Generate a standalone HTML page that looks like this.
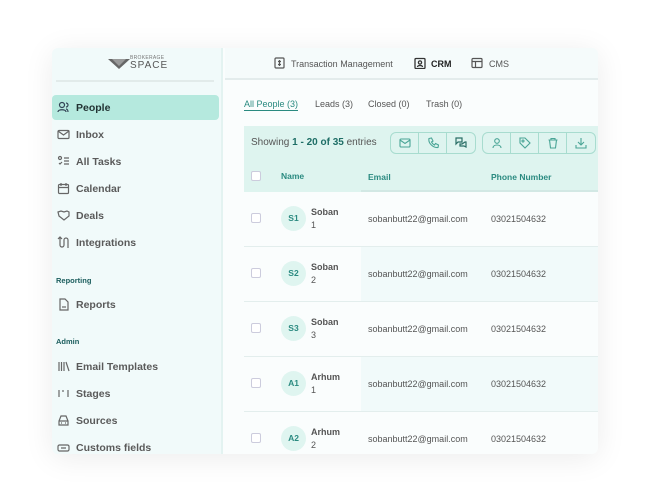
<!DOCTYPE html>
<html><head><meta charset="utf-8"><style>
*{box-sizing:border-box;margin:0;padding:0}
body{width:647px;height:504px;background:#fff;font-family:"Liberation Sans",sans-serif;position:relative;overflow:hidden}
.card{position:absolute;left:52px;top:48px;width:546px;height:406px;background:#fafdfd;border-radius:6px;box-shadow:0 4px 30px rgba(0,0,0,.08);overflow:hidden}
.side{position:absolute;left:0;top:0;width:171px;height:406px;background:#f1fafa;border-right:2px solid #e3f3f1}
.logo{position:absolute;left:4px;top:0;width:158px;height:34px;border-bottom:2px solid #e2ebea}
.nav{position:absolute;left:0;width:167px;height:25px;font-size:10.5px;font-weight:bold;color:#5a5a5a;display:flex;align-items:center;padding-left:24px}
.nav svg{position:absolute;left:5px;top:6px}
.nav.act{background:#b5e9de;color:#233;border-radius:4px}
.sec{position:absolute;left:4px;font-size:7.5px;font-weight:bold;color:#1b5d5d}
.top{position:absolute;left:173px;top:0;right:0;height:32px;border-bottom:2px solid #e3ecec;background:#f5fbfb;font-size:9px;color:#555}
.top span{position:absolute;top:11px}
.tabs{position:absolute;left:192px;top:51px;font-size:9px;color:#555}
.tabs span{position:absolute;top:0;white-space:nowrap}
.bar{position:absolute;left:192px;top:78px;right:0;height:34px;background:#def4ef}
.th{position:absolute;left:192px;top:112px;right:0;height:32px;background:#def4ef;font-size:8.5px;font-weight:bold;color:#2a8a80}
.row{position:absolute;left:192px;right:0;height:55px;border-bottom:1.5px solid #e3eeed;font-size:9px;color:#555}
.cb{position:absolute;left:7px;width:10px;height:10px;border:1px solid #ccd;border-radius:2px;background:#fff}
.av{position:absolute;left:37px;width:25px;height:25px;border-radius:50%;background:#dff5f0;color:#2a8a80;font-weight:bold;font-size:8.5px;text-align:center;line-height:25px}
.btn{position:absolute;top:6px;height:22px;border:1.5px solid #a8dccf;border-radius:6px;display:flex}
.btn div{width:28px;border-right:1.5px solid #a8dccf;display:flex;align-items:center;justify-content:center}
.btn div:last-child{border-right:none}
</style></head><body>
<div class="card">
 <div class="side">
  <div class="logo">
   <svg style="position:absolute;left:52px;top:10px" width="22" height="12"><path d="M0 1 L22 1 L11 11 Z" fill="#666"/><path d="M4 1 L11 8 L18 1" fill="#999"/></svg>
   <div style="position:absolute;left:74px;top:7px;font-size:5px;color:#777;letter-spacing:.3px">BROKERAGE</div>
   <div style="position:absolute;left:74px;top:12px;font-size:10px;color:#555;letter-spacing:1px">SPACE</div>
  </div>
  <div class="nav act" style="top:47px"><svg width="13" height="13" fill="none" stroke="#345" stroke-width="1.2"><circle cx="5" cy="4" r="2.5"/><path d="M1 11c0-3 8-3 8 0M9 2a2 2 0 010 4M11 11c0-2-1-3-2-3"/></svg>People</div>
  <div class="nav" style="top:74px"><svg width="13" height="13" fill="none" stroke="#666" stroke-width="1.2"><rect x="1" y="2.5" width="11" height="8" rx="1"/><path d="M1 3l5.5 4 5.5-4"/></svg>Inbox</div>
  <div class="nav" style="top:101px"><svg width="13" height="13" fill="none" stroke="#666" stroke-width="1.2"><circle cx="3" cy="3" r="1.5"/><path d="M2 8l1 1 2-2M7 3h5M7 6h5M7 9h5"/></svg>All Tasks</div>
  <div class="nav" style="top:128px"><svg width="13" height="13" fill="none" stroke="#666" stroke-width="1.2"><rect x="1.5" y="2.5" width="10" height="9" rx="1"/><path d="M1.5 5.5h10M4 1v3M9 1v3"/></svg>Calendar</div>
  <div class="nav" style="top:155px"><svg width="13" height="13" fill="none" stroke="#666" stroke-width="1.2"><path d="M1 3l3-1 3 1 3-1 2 1v4l-5 4-5-4z"/></svg>Deals</div>
  <div class="nav" style="top:182px"><svg width="13" height="13" fill="none" stroke="#666" stroke-width="1.2"><path d="M3 1v8a2 2 0 004 0V4a2 2 0 014 0v8M1 3l2-2 2 2"/></svg>Integrations</div>
  <div class="sec" style="top:228px">Reporting</div>
  <div class="nav" style="top:244px"><svg width="13" height="13" fill="none" stroke="#666" stroke-width="1.2"><path d="M3 1h5l3 3v8H3z"/><path d="M5 9h4"/></svg>Reports</div>
  <div class="sec" style="top:289px">Admin</div>
  <div class="nav" style="top:306px"><svg width="13" height="13" fill="none" stroke="#666" stroke-width="1.2"><path d="M2 2v9M4.5 2v9M7 2v9M9 2l3 9"/></svg>Email Templates</div>
  <div class="nav" style="top:333px"><svg width="13" height="13" fill="none" stroke="#666" stroke-width="1.2"><path d="M2 3v7M11 3v7M6 3v2"/></svg>Stages</div>
  <div class="nav" style="top:360px"><svg width="13" height="13" fill="none" stroke="#666" stroke-width="1.2"><path d="M4 2h5l2 5v4H2V7z"/><path d="M2 7h9M4 9h1M8 9h1"/></svg>Sources</div>
  <div class="nav" style="top:387px"><svg width="13" height="13" fill="none" stroke="#666" stroke-width="1.2"><rect x="1" y="4" width="11" height="6" rx="1.5"/><path d="M4 7h5"/></svg>Customs fields</div>
 </div>
 <div class="top">
  <svg style="position:absolute;left:49px;top:9px" width="11" height="12" fill="none" stroke="#555" stroke-width="1.2"><rect x="1" y="1" width="9" height="10" rx="1"/><path d="M5.5 3v6M4 4.5h3M4 7.5h3"/></svg>
  <span style="left:66px">Transaction Management</span>
  <svg style="position:absolute;left:189px;top:9px" width="12" height="12" fill="none" stroke="#333" stroke-width="1.3"><rect x="1" y="1.5" width="10" height="10" rx="1"/><circle cx="6" cy="5.5" r="1.6"/><path d="M3.5 10c0-2 5-2 5 0"/></svg>
  <span style="left:206px;font-weight:bold;color:#222">CRM</span>
  <svg style="position:absolute;left:246px;top:9px" width="12" height="12" fill="none" stroke="#555" stroke-width="1.2"><rect x="1" y="1.5" width="10" height="9" rx="1"/><path d="M1 4.5h10M4.5 4.5v6"/></svg>
  <span style="left:264px">CMS</span>
 </div>
 <div class="tabs">
  <span style="left:0;color:#2a8a80;border-bottom:1.5px solid #2a8a80;padding-bottom:1px">All People (3)</span>
  <span style="left:71px">Leads (3)</span>
  <span style="left:124px">Closed (0)</span>
  <span style="left:182px">Trash (0)</span>
 </div>
 <div class="bar">
  <div style="position:absolute;left:7px;top:11px;font-size:10px;color:#555">Showing <b style="color:#1e6e66">1 - 20 of 35</b> entries</div>
  <div class="btn" style="left:146px">
   <div><svg width="12" height="10" fill="none" stroke="#4aa596" stroke-width="1.1"><rect x="1" y="1" width="10" height="8" rx="1"/><path d="M1 2l5 3.5 5-3.5"/></svg></div>
   <div><svg width="12" height="12" fill="none" stroke="#4aa596" stroke-width="1.1"><path d="M2 1.5l2.5-.5 1.5 3-1.5 1a6 6 0 003 3l1-1.5 3 1.5-.5 2.5C6 11 1 6 2 1.5z"/></svg></div>
   <div><svg width="12" height="12" fill="none" stroke="#2a6e66" stroke-width="1.2"><path d="M1 1h6v4H3L1 7zM5 7h2l3-2h1v5l-2-1H5z"/></svg></div>
  </div>
  <div class="btn" style="left:238px">
   <div><svg width="12" height="12" fill="none" stroke="#4aa596" stroke-width="1.1"><circle cx="6" cy="4" r="2.3"/><path d="M2 11c0-4 8-4 8 0"/></svg></div>
   <div><svg width="12" height="12" fill="none" stroke="#4aa596" stroke-width="1.1"><path d="M1 1h5l5 5-5 5-5-5z"/><circle cx="4" cy="4" r="1"/></svg></div>
   <div><svg width="12" height="12" fill="none" stroke="#4aa596" stroke-width="1.1"><path d="M1.5 3h9M4 3V1.5h4V3M2.5 3l1 8h5l1-8"/></svg></div>
   <div><svg width="12" height="12" fill="none" stroke="#4aa596" stroke-width="1.1"><path d="M6 1v7M3 5l3 3 3-3M1 8v3h10V8"/></svg></div>
  </div>
 </div>
 <div class="th">
  <div class="cb" style="top:11px"></div>
  <span style="position:absolute;left:37px;top:11px">Name</span>
  <div style="position:absolute;left:117px;top:0;right:0;height:32px;border-bottom:2px solid #d2e8e4"></div>
  <span style="position:absolute;left:124px;top:12px">Email</span>
  <span style="position:absolute;left:247px;top:12px">Phone Number</span>
 </div>
 <div class="row" style="top:144px"><div class="cb" style="top:21px"></div><div class="av" style="top:14px">S1</div><b style="position:absolute;left:67px;top:15px;color:#555">Soban</b><span style="position:absolute;left:67px;top:28px">1</span><span style="position:absolute;left:124px;top:22px">sobanbutt22@gmail.com</span><span style="position:absolute;left:247px;top:22px">03021504632</span></div>
 <div class="row" style="top:199px"><div style="position:absolute;left:117px;top:0;right:0;bottom:0;background:#f1fafa"></div><div class="cb" style="top:21px"></div><div class="av" style="top:14px">S2</div><b style="position:absolute;left:67px;top:15px;color:#555">Soban</b><span style="position:absolute;left:67px;top:28px">2</span><span style="position:absolute;left:124px;top:22px">sobanbutt22@gmail.com</span><span style="position:absolute;left:247px;top:22px">03021504632</span></div>
 <div class="row" style="top:254px"><div class="cb" style="top:21px"></div><div class="av" style="top:14px">S3</div><b style="position:absolute;left:67px;top:15px;color:#555">Soban</b><span style="position:absolute;left:67px;top:28px">3</span><span style="position:absolute;left:124px;top:22px">sobanbutt22@gmail.com</span><span style="position:absolute;left:247px;top:22px">03021504632</span></div>
 <div class="row" style="top:309px"><div style="position:absolute;left:117px;top:0;right:0;bottom:0;background:#f1fafa"></div><div class="cb" style="top:21px"></div><div class="av" style="top:14px">A1</div><b style="position:absolute;left:67px;top:15px;color:#555">Arhum</b><span style="position:absolute;left:67px;top:28px">1</span><span style="position:absolute;left:124px;top:22px">sobanbutt22@gmail.com</span><span style="position:absolute;left:247px;top:22px">03021504632</span></div>
 <div class="row" style="top:364px;border:none"><div class="cb" style="top:21px"></div><div class="av" style="top:14px">A2</div><b style="position:absolute;left:67px;top:15px;color:#555">Arhum</b><span style="position:absolute;left:67px;top:28px">2</span><span style="position:absolute;left:124px;top:22px">sobanbutt22@gmail.com</span><span style="position:absolute;left:247px;top:22px">03021504632</span></div>
</div>
</body></html>
